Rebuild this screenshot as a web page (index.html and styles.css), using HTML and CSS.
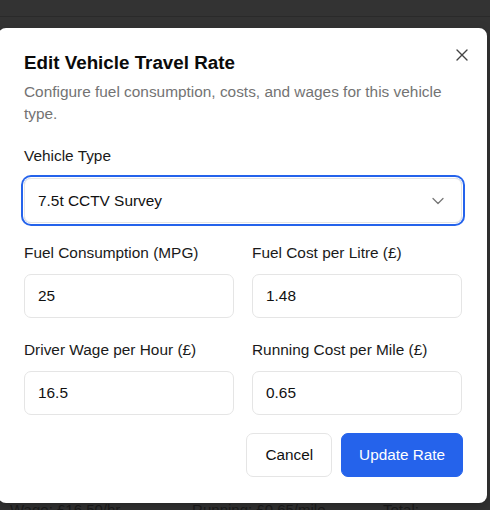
FILE: index.html
```html
<!DOCTYPE html>
<html>
<head>
<meta charset="utf-8">
<link rel="stylesheet" href="styles.css">
</head>
<body>
<div class="page">
  <div class="topbar"></div>
  <div class="behind">
    <span>Wage: £16.50/hr</span>
    <span>Running: £0.65/mile</span>
    <span>Total: £0.65/mile</span>
  </div>
</div>
<div class="dialog">
  <button class="close" aria-label="Close">
    <svg width="12" height="12" viewBox="0 0 12 12"><path d="M1 1 L11 11 M11 1 L1 11" stroke="#444" stroke-width="1.4" stroke-linecap="round" fill="none"/></svg>
  </button>
  <h2 class="title">Edit Vehicle Travel Rate</h2>
  <p class="desc">Configure fuel consumption, costs, and wages for this vehicle type.</p>
  <div class="field">
    <label class="label">Vehicle Type</label>
    <div class="select">
      <span>7.5t CCTV Survey</span>
      <svg width="12" height="8" viewBox="0 0 12 8"><path d="M1 1.5 L6 6.5 L11 1.5" stroke="#777" stroke-width="1.3" fill="none" stroke-linecap="round" stroke-linejoin="round"/></svg>
    </div>
  </div>
  <div class="grid first">
    <div class="field">
      <label class="label">Fuel Consumption (MPG)</label>
      <div class="input">25</div>
    </div>
    <div class="field">
      <label class="label">Fuel Cost per Litre (£)</label>
      <div class="input">1.48</div>
    </div>
  </div>
  <div class="grid second">
    <div class="field">
      <label class="label">Driver Wage per Hour (£)</label>
      <div class="input">16.5</div>
    </div>
    <div class="field">
      <label class="label">Running Cost per Mile (£)</label>
      <div class="input">0.65</div>
    </div>
  </div>
  <div class="actions">
    <button class="btn cancel">Cancel</button>
    <button class="btn primary">Update Rate</button>
  </div>
</div>
</body>
</html>
```
FILE: styles.css
```css
html, body {
  margin: 0;
  padding: 0;
  width: 490px;
  height: 510px;
  overflow: hidden;
  background: #333333;
  font-family: "Liberation Sans", Arial, sans-serif;
}
.page {
  height: 510px;
  display: flex;
  flex-direction: column;
}
.topbar {
  height: 16px;
  border-bottom: 1px solid #2a2a2a;
}
.behind {
  margin-top: auto;
  display: flex;
  padding-left: 10px;
  height: 9px;
  font-size: 15px;
  line-height: 18px;
  color: #1c1c1c;
  overflow: visible;
}
.behind span:nth-child(1) { width: 186px; }
.behind span:nth-child(2) { width: 195px; }
.dialog {
  position: absolute;
  left: -2px;
  top: 28px;
  width: 489px;
  height: 475px;
  box-sizing: border-box;
  padding: 21px 25px 0 26px;
  background: #ffffff;
  border-radius: 8px;
  box-shadow: 0 4px 12px rgba(0,0,0,0.25);
}
.close {
  position: absolute;
  right: 17px;
  top: 19px;
  width: 16px;
  height: 16px;
  padding: 0;
  border: none;
  background: none;
  display: flex;
  align-items: center;
  justify-content: center;
}
.title {
  margin: 0;
  font-size: 18.8px;
  line-height: 28px;
  font-weight: 700;
  color: #0a0a0a;
}
.desc {
  margin: 4px 0 0;
  font-size: 15.4px;
  line-height: 22px;
  color: #737373;
}
.field {
  display: flex;
  flex-direction: column;
}
.dialog > .field {
  margin-top: 21px;
}
.label {
  display: block;
  font-size: 15.4px;
  line-height: 20px;
  color: #1a1a1a;
  margin-bottom: 12px;
}
.select {
  height: 45px;
  box-sizing: border-box;
  border: 1px solid #e5e5e5;
  border-radius: 7px;
  box-shadow: 0 0 0 1px #ffffff, 0 0 0 3px #2563eb;
  display: flex;
  align-items: center;
  justify-content: space-between;
  padding: 0 17px 0 13px;
  font-size: 15.4px;
  color: #111;
}
.grid {
  display: grid;
  grid-template-columns: 1fr 1fr;
  column-gap: 18px;
}
.grid.first { margin-top: 20px; }
.grid.second { margin-top: 22px; }
.grid .label { margin-bottom: 11px; }
.input {
  height: 44px;
  box-sizing: border-box;
  border: 1px solid #e5e5e5;
  border-radius: 7px;
  display: flex;
  align-items: center;
  padding: 0 13px;
  font-size: 15.4px;
  color: #111;
}
.actions {
  margin-top: 18px;
  margin-right: -1px;
  display: flex;
  justify-content: flex-end;
  gap: 9px;
}
.btn {
  height: 44px;
  font-family: inherit;
  font-size: 15.3px;
  border-radius: 7px;
  box-sizing: border-box;
}
.cancel {
  background: #ffffff;
  border: 1px solid #e5e5e5;
  color: #111;
  padding: 0 18px;
}
.primary {
  background: #2563eb;
  border: 1px solid #2563eb;
  color: #ffffff;
  padding: 0 17px;
}
```
